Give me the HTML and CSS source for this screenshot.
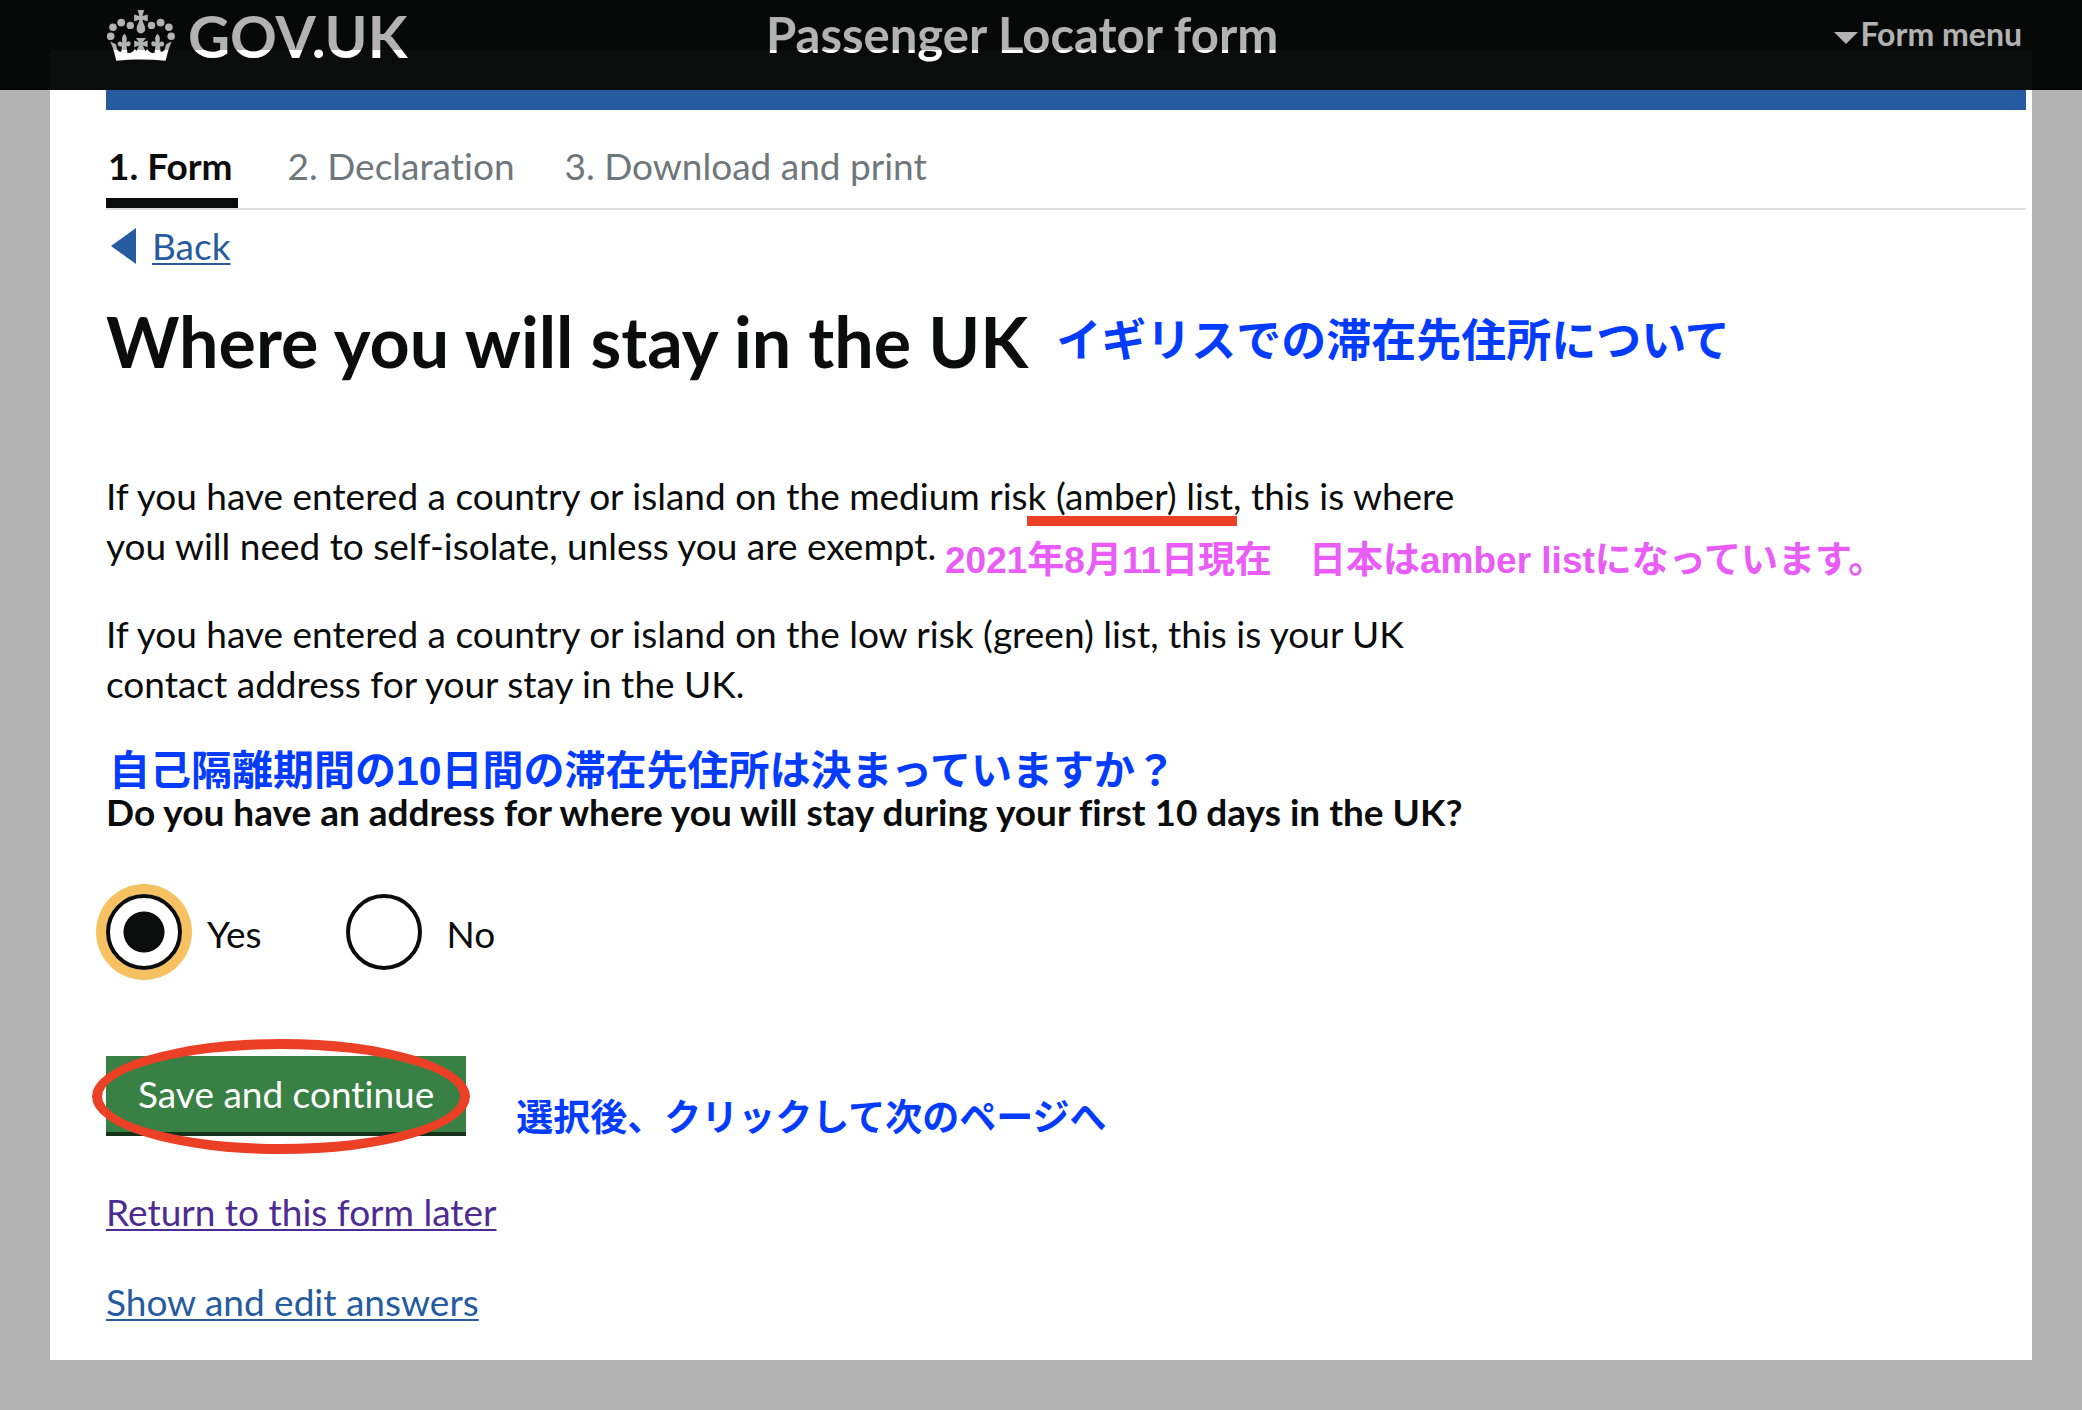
FILE: index.html
```
<!DOCTYPE html>
<html lang="en">
<head>
    <meta charset="UTF-8">
    <meta name="viewport" content="width=device-width, initial-scale=1.0">
    <title>Where you will stay in the UK - Passenger Locator form - GOV.UK</title>
    <link rel="stylesheet" href="styles.css">
</head>
<body>
    <header class="header">
        <a class="brand" href="#">
            <svg class="crown" viewBox="0 0 68 51" width="68" height="51" aria-hidden="true">
                <circle cx="3.7" cy="26.3" r="3.8"/>
                <circle cx="6" cy="17.3" r="3.8"/>
                <circle cx="14.2" cy="12.6" r="3.9"/>
                <circle cx="23.3" cy="15.4" r="3.7"/>
                <circle cx="44.5" cy="15.4" r="3.7"/>
                <circle cx="53.6" cy="12.6" r="3.9"/>
                <circle cx="61.9" cy="17.3" r="3.8"/>
                <circle cx="64.2" cy="26.3" r="3.8"/>
                <!-- top cross and pear -->
                <path d="M30.7 0h6.4l-1.6 5.9 5.2-1.3v6.6l-5.2-1.4c.2 3.2 2.7 5.6 2.7 9 0 2.8-1.7 4.6-4.3 4.6s-4.3-1.8-4.3-4.6c0-3.4 2.5-5.8 2.7-9l-5.2 1.4V4.6l5.2 1.3z"/>
                <!-- centre cross -->
                <path d="M28.8 28H39l-3.4 4.2 5-1.8v6.8l-4.8-1.6L39 42H28.8l3.2-6.4-4.8 1.6v-6.8l5 1.8z"/>
                <!-- fleurs -->
                <path d="M17.4 23.7c2.3 2.2 3.1 5 1.8 8.8 2.7-2.3 4.6-1 4.4 1.4-.2 2-2 2.7-4.2 2.1l1 6.2h-6.2l.7-6c-2.4.7-4.1 0-4.2-2.1-.1-2.3 2.2-3.6 4.8-1.4-1.2-3.9-.4-6.8 1.9-9z"/>
                <path d="M50.5 23.7c2.3 2.2 3.1 5 1.9 9 2.6-2.2 4.9-.9 4.8 1.4-.1 2.1-1.8 2.8-4.2 2.1l.7 6h-6.2l1-6.2c-2.2.6-4-.1-4.2-2.1-.2-2.4 1.7-3.7 4.4-1.4-1.3-3.8-.5-6.6 1.8-8.8z"/>
                <!-- base -->
                <path d="M3.2 31.4l5.800 2.800 1 4.200c.7 3.600 5.200 4.800 7.400 1.400 2.200 4.600 8.400 4.300 10.400-1.200l1.400 2.400c2.800 1.200 6.800 1.200 9.600 0l1.400-2.400c2 5.500 8.200 5.800 10.400 1.200 2.200 3.400 6.700 2.200 7.400-1.400l1-4.200 5.800-2.800c-3 6.400-4.600 12.700-6.200 19.300-16-1.600-33.400-1.600-49.300 0C7.800 44.100 6.200 37.800 3.200 31.400z"/>
            </svg>
            <span>GOV.UK</span>
        </a>
        <span class="service-name">Passenger Locator form</span>
        <button class="menu-button" type="button"><span class="arrow-down"></span>Form menu</button>
    </header>

    <main class="content">
        <ol class="steps">
            <li class="step step-current">1. Form</li>
            <li class="step">2. Declaration</li>
            <li class="step">3. Download and print</li>
        </ol>
        <a class="back-link" href="#"><span class="arrow-left"></span><span class="back-text">Back</span></a>

        <div class="heading-row">
            <h1>Where you will stay in the UK</h1>
            <span class="note note-large" lang="ja">イギリスでの滞在先住所について</span>
        </div>

        <p class="text">If you have entered a country or island on the medium risk <span class="marked">(amber) list</span>, this is where you will need to self-isolate, unless you are exempt.
            <span class="note note-pink" lang="ja">2021年8月11日現在　日本はamber listになっています。</span>
        </p>
        <p class="text">If you have entered a country or island on the low risk (green) list, this is your UK contact address for your stay in the UK.</p>

        <form>
            <div class="note note-question" lang="ja">自己隔離期間の10日間の滞在先住所は決まっていますか？</div>
            <fieldset>
                <legend>Do you have an address for where you will stay during your first 10 days in the UK?</legend>
                <div class="radios">
                    <div class="radio">
                        <input type="radio" id="address-yes" name="address" checked>
                        <label for="address-yes">Yes</label>
                    </div>
                    <div class="radio">
                        <input type="radio" id="address-no" name="address">
                        <label for="address-no">No</label>
                    </div>
                </div>
            </fieldset>
            <div class="actions">
                <div class="button-wrap">
                    <button class="button" type="button">Save and continue</button>
                    <span class="ring"></span>
                </div>
                <span class="note note-small" lang="ja">選択後、クリックして次のページへ</span>
            </div>
        </form>

        <div class="links">
            <a class="visited" href="#">Return to this form later</a>
            <a href="#">Show and edit answers</a>
        </div>
    </main>
    <div class="shade"></div>
</body>
</html>
```
FILE: styles.css
```
* {
    box-sizing: border-box;
}
body {
    margin: 0;
    font-family: Lato, sans-serif;
    font-size: 37px;
    line-height: 50px;
    font-variant-ligatures: none;
    color: #0b0c0c;
    background-color: #fff;
}
a {
    color: #265c9f;
    text-decoration-thickness: 2px;
    text-underline-offset: 3px;
    text-decoration-skip-ink: none;
}
.header {
    display: grid;
    grid-template-columns: 660px 1fr auto;
    align-items: start;
    height: 90px;
    padding: 0 60px 0 106px;
    background-color: #0b0c0c;
    color: #fff;
    font-weight: 700;
}
.brand {
    display: flex;
    gap: 13px;
    padding-left: 1px;
    color: #fff;
    font-size: 58px;
    line-height: 72px;
    text-decoration: none;
}
.crown {
    margin-top: 10px;
    fill: #fff;
}
.service-name {
    font-size: 49px;
    line-height: 68px;
}
.menu-button {
    display: flex;
    align-items: center;
    gap: 2px;
    padding: 0;
    border: 0;
    background: none;
    color: #fff;
    font: 700 32px/68px Lato, sans-serif;
}
.arrow-down {
    margin-top: 8px;
    border: 12px solid transparent;
    border-top-color: #fff;
    border-bottom: 0;
}

.content {
    padding: 0 56px 83px 106px;
}
.steps {
    display: flex;
    gap: 50px;
    margin: 0;
    padding: 31px 0 0;
    list-style: none;
    border-top: 20px solid #265c9f;
    border-bottom: 2px solid #dee0e2;
    color: #6f777b;
}
.step {
    padding-bottom: 17px;
}
.step-current {
    padding: 0 5px 7px 2px;
    border-bottom: 10px solid #0b0c0c;
    color: #0b0c0c;
    font-weight: 700;
}
.back-link {
    display: flex;
    align-items: center;
    gap: 16px;
    margin: 11px 0 30px;
    padding-left: 5px;
    text-decoration: none;
}
.back-text {
    text-decoration: underline 2px;
    text-underline-offset: 3px;
}
.arrow-left {
    border: 18px solid transparent;
    border-right: 25px solid #265c9f;
    border-left: 0;
}
.heading-row {
    display: flex;
    align-items: center;
    gap: 28px;
    margin-bottom: 90px;
}
h1 {
    margin: 0;
    font-size: 70px;
    line-height: 80px;
}
.text {
    position: relative;
    max-width: 72%;
    margin: 0 0 38px;
}
/* red line under the list name */
.marked {
    position: relative;
}
.marked::after {
    content: "";
    position: absolute;
    left: -29px;
    right: -4px;
    bottom: -8px;
    height: 10px;
    background-color: #eb4026;
}

.note {
    color: #043cff;
    font-family: "Liberation Sans", "Noto Sans CJK JP", sans-serif;
    font-weight: 700;
    white-space: nowrap;
}
.note-large {
    padding-top: 2px;
    font-size: 45px;
}
.note-pink {
    position: absolute;
    left: 839px;
    top: 65px;
    color: #ea5cf7;
    font-size: 37px;
}
.note-question {
    margin-top: 46px;
    padding-left: 3px;
    font-size: 41px;
    line-height: 32px;
}
.note-small {
    font-size: 37px;
    line-height: 26px;
}

fieldset {
    margin: 0;
    padding: 0;
    border: 0;
}
legend {
    padding: 0;
    font-weight: 700;
}
.radios {
    display: flex;
    gap: 84px;
    margin-top: 57px;
}
.radio {
    display: flex;
    align-items: center;
    gap: 25px;
}
.radio input {
    appearance: none;
    width: 76px;
    height: 76px;
    margin: 0;
    border: 4px solid #0b0c0c;
    border-radius: 50%;
    background-color: #fff;
}
.radio input:checked {
    background: radial-gradient(circle, #0b0c0c 20px, #fff 21px);
    box-shadow: 0 0 0 10px #f7c161;
}
.radio label {
    padding-top: 4px;
}
.actions {
    display: flex;
    align-items: flex-end;
    gap: 50px;
    margin: 86px 0 55px;
}
.button-wrap {
    position: relative;
}
.button {
    display: block;
    padding: 13px 32px;
    border: 0;
    background-color: #388043;
    box-shadow: 0 4px 0 #15311b;
    color: #fff;
    font: 37px/50px Lato, sans-serif;
    font-variant-ligatures: none;
}
/* red ring round the button */
.ring {
    position: absolute;
    inset: -17px -4px -22px -14px;
    border: 10px solid #eb4026;
    border-radius: 50%;
    pointer-events: none;
}
.links {
    display: flex;
    flex-direction: column;
    align-items: flex-start;
    gap: 40px;
}
.links .visited {
    color: #4c2c92;
}

/* dimmed frame round the window */
.shade {
    position: fixed;
    inset: 0;
    border: 50px solid rgba(0, 0, 0, 0.3);
    pointer-events: none;
}
```
